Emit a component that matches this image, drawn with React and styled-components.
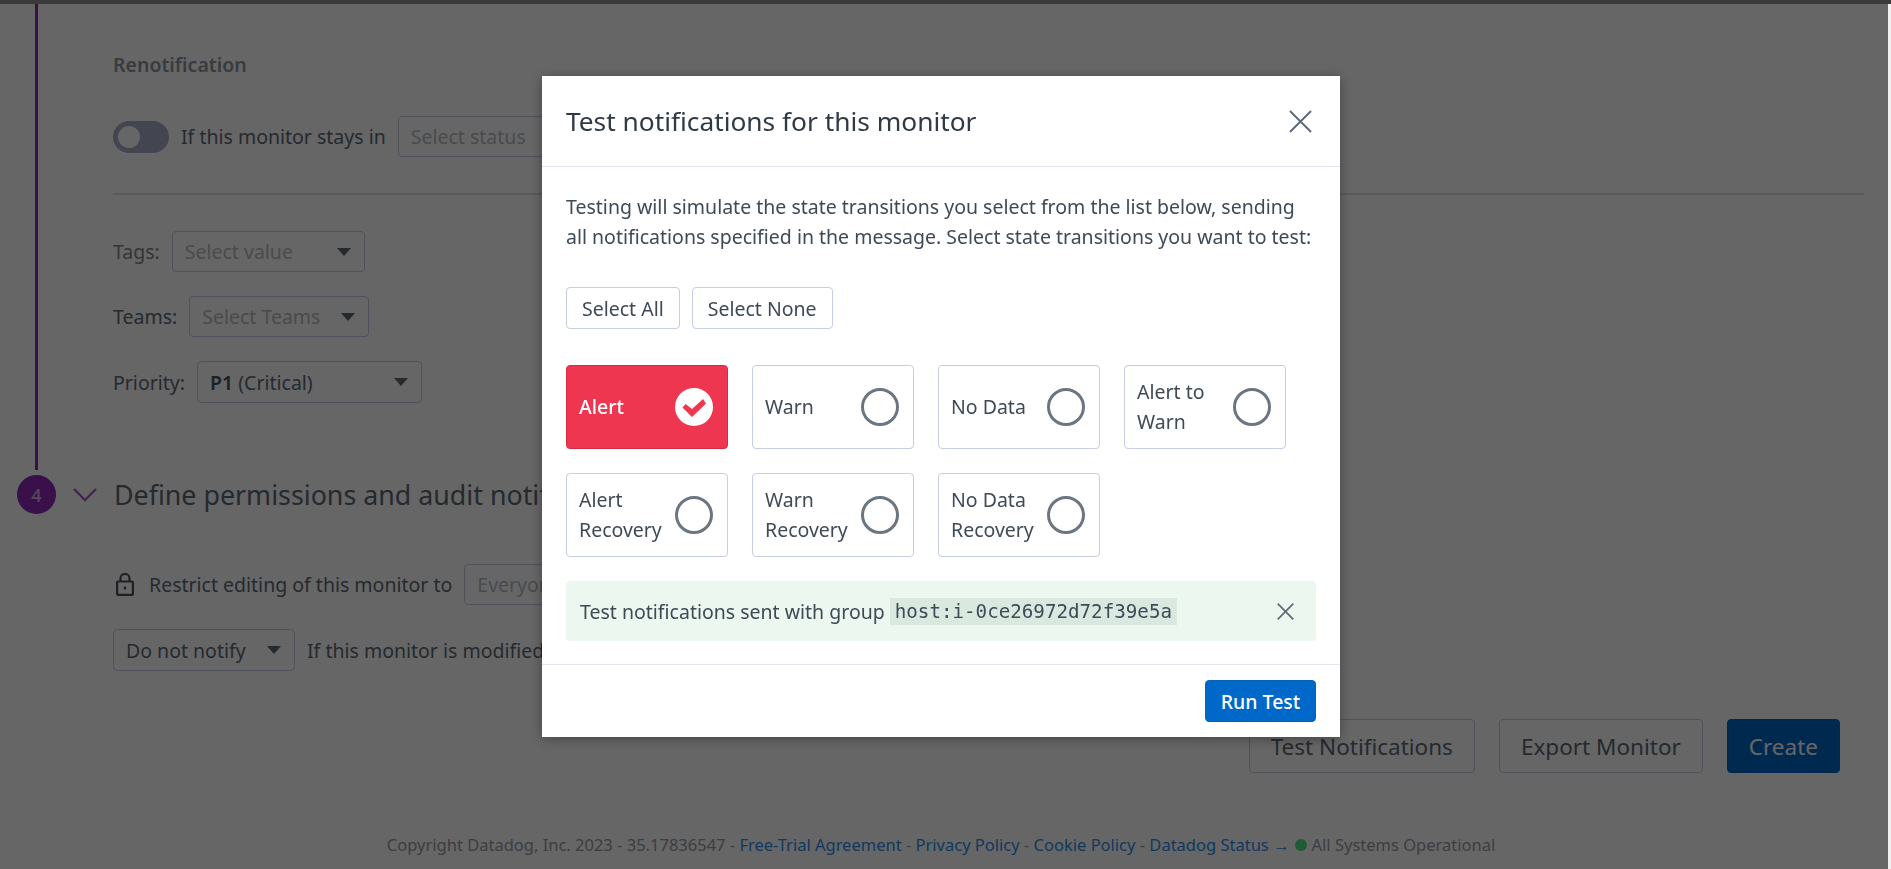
import React from 'react'
import styled, { createGlobalStyle } from 'styled-components'

const GlobalStyle = createGlobalStyle`
  html, body {
    margin: 0;
    height: 100%;
    overflow: hidden;
    background: #f0f0f0;
    font-family: "Noto Sans", "Open Sans", sans-serif;
    font-size: 19.5px;
    color: #5e6a76;
  }
  * { box-sizing: border-box; }
`

const TopBar = styled.div`
  height: 4px;
  background: #3a3a3a;
`
const Page = styled.div`
  width: 1888px;
  height: 865px;
  background: #fff;
  overflow: hidden;
`
const Main = styled.div`
  display: grid;
  grid-template-columns: 39px 1fr;
  column-gap: 57px;
  padding: 0 24px 0 17px;
`
const Rail = styled.div`
  display: flex;
  justify-content: center;
  padding-bottom: 5px;
`
const RailLine = styled.div`
  width: 3px;
  background: #8f2ab8;
`
const Section = styled.div`
  padding: 46px 0 72px;
`
const SubTitle = styled.div`
  font-size: 19.5px;
  font-weight: 600;
  line-height: 30px;
  color: #8c96a2;
`
const Row = styled.div`
  display: flex;
  align-items: center;
  gap: 12px;
  margin-top: ${p => p.$top ?? 24}px;
  white-space: nowrap;
`
const Toggle = styled.div`
  width: 56px;
  height: 32px;
  border-radius: 16px;
  background: #a7aecb;
  padding: 5px;
  flex: none;
`
const ToggleKnob = styled.div`
  width: 22px;
  height: 22px;
  border-radius: 50%;
  background: #fff;
`
const Divider = styled.div`
  height: 2px;
  margin-top: 36px;
  background: #dfe1f0;
`
const Label = styled.span`
  color: ${p => (p.$muted ? '#7d8793' : '#5e6a76')};
`
const Select = styled.div`
  display: flex;
  align-items: center;
  justify-content: space-between;
  width: ${p => p.$w}px;
  height: ${p => p.$h ?? 41}px;
  padding: 0 13px 0 12px;
  border: 1px solid #c7cde3;
  border-radius: 4px;
  color: ${p => (p.$value ? '#5e6a76' : '#b6bbc4')};
  flex: none;
  b { font-weight: 600; color: #4a545e; }
`
const Caret = styled.i`
  width: 0;
  height: 0;
  border-left: 7px solid transparent;
  border-right: 7px solid transparent;
  border-top: 8px solid #5e6a76;
`
const Circle = styled.div`
  width: 39px;
  height: 39px;
  border-radius: 50%;
  background: #8f2ab8;
  color: #ffffffaa;
  display: flex;
  align-items: center;
  justify-content: center;
  font-size: 18px;
  font-weight: 500;
`
const StepHead = styled.div`
  display: flex;
  align-items: center;
  width: 470px;
  height: 39px;
  margin-left: -40px;
  gap: 17px;
  overflow: hidden;
  font-size: 26.8px;
  white-space: nowrap;
  color: #5e6a76;
`
const StepBody = styled.div`
  grid-column: 2;
`
const Actions = styled.div`
  display: flex;
  justify-content: flex-end;
  gap: 24px;
  margin-top: 48px;
  padding-right: 24px;
`
const BigButton = styled.button`
  height: 54px;
  padding: 0 21px;
  font: inherit;
  font-size: 22.5px;
  border-radius: 4px;
  border: 1px solid ${p => (p.$primary ? '#0068c9' : '#c7cde3')};
  background: ${p => (p.$primary ? '#0068c9' : '#fff')};
  color: ${p => (p.$primary ? '#fff' : '#5e6a76')};
`
const Footer = styled.div`
  display: flex;
  justify-content: center;
  align-items: center;
  gap: 5px;
  margin-top: 58px;
  padding-right: 6px;
  font-size: 16.5px;
  line-height: 28px;
  color: #979ba3;
  white-space: pre;
`
const FooterLink = styled.a`
  color: #2e8fe8;
`
const Arrow = styled.span`
  font-family: "Liberation Sans", sans-serif;
`
const StatusDot = styled.span`
  width: 12px;
  height: 12px;
  border-radius: 50%;
  background: #4ce685;
`

const Overlay = styled.div`
  position: fixed;
  top: 4px;
  left: 0;
  right: 3px;
  bottom: 0;
  background: rgba(0, 0, 0, 0.6);
  display: flex;
  justify-content: center;
  align-items: flex-start;
  padding: 72px 6px 0 0;
`
const Modal = styled.div`
  width: 798px;
  height: 661px;
  background: #fff;
  color: #3e4a56;
  box-shadow: 0 2px 12px rgba(0, 0, 0, 0.35);
  display: flex;
  flex-direction: column;
`
const ModalHeader = styled.div`
  display: flex;
  align-items: center;
  justify-content: space-between;
  height: 91px;
  padding: 0 28px 0 24px;
  border-bottom: 1px solid #e2e5f0;
`
const ModalTitle = styled.div`
  font-size: 26.3px;
  color: #2f3a45;
`
const ModalBody = styled.div`
  flex: 1;
  padding: 25px 24px 0;
`
const Intro = styled.p`
  margin: 0;
  line-height: 30px;
  white-space: pre;
`
const SmallButtons = styled.div`
  display: flex;
  gap: 12px;
  margin-top: 35px;
`
const SmallButton = styled.button`
  height: 42px;
  padding: 0 15px;
  font: inherit;
  color: #3e4a56;
  background: #fff;
  border: 1px solid #c7cde3;
  border-radius: 4px;
`
const CardGrid = styled.div`
  display: grid;
  grid-template-columns: repeat(4, 162px);
  grid-auto-rows: 84px;
  gap: 24px;
  margin-top: 36px;
`
const Card = styled.div`
  display: flex;
  align-items: center;
  justify-content: space-between;
  padding: 0 14px 0 12px;
  line-height: 30px;
  border-radius: 4px;
  border: 1px solid ${p => (p.$active ? '#d92a44' : '#c7cde3')};
  background: ${p => (p.$active ? '#ee3650' : '#fff')};
  color: ${p => (p.$active ? '#fff' : '#3e4a56')};
  font-weight: ${p => (p.$active ? 500 : 400)};
`
const CardText = styled.span`
  width: 90px;
`
const Radio = styled.span`
  width: 38px;
  height: 38px;
  border-radius: 50%;
  border: 3.5px solid #6b7680;
  flex: none;
`
const Banner = styled.div`
  display: flex;
  align-items: center;
  justify-content: space-between;
  height: 60px;
  margin-top: 24px;
  padding: 0 22px 0 14px;
  background: #ebf7ef;
  border-radius: 4px;
`
const BannerText = styled.div`
  display: flex;
  align-items: center;
  gap: 5px;
`
const Code = styled.code`
  font-family: "DejaVu Sans Mono", "Liberation Mono", monospace;
  font-size: 19.2px;
  line-height: 27px;
  padding: 0 5px;
  background: #d9e9e0;
`
const ModalFooter = styled.div`
  display: flex;
  justify-content: flex-end;
  align-items: center;
  height: 73px;
  padding: 0 24px;
  border-top: 1px solid #e2e5f0;
`
const RunButton = styled.button`
  width: 111px;
  height: 42px;
  font: inherit;
  font-weight: 500;
  color: #fff;
  background: #0068c9;
  border: 1px solid #0a62b8;
  border-radius: 4px;
`

const CheckMark = () => (
  <svg width="38" height="38" viewBox="0 0 38 38" style={{ flex: 'none' }}>
    <circle cx="19" cy="19" r="19" fill="#fff" />
    <path d="M7.5 19.5L10.5 16L17 21L28 11L31 15.5L17 29z" fill="#ee3650" />
  </svg>
)

const CloseIcon = ({ size, color, width }) => (
  <svg width={size} height={size} viewBox="0 0 24 24" fill="none" stroke={color} strokeWidth={width}>
    <path d="M1 1l22 22M23 1L1 23" />
  </svg>
)

const LockIcon = () => (
  <svg width="18" height="23" viewBox="0 0 18 23" fill="none" stroke="#4a545e" strokeWidth="2.2" style={{ flex: 'none', margin: '0 3px' }}>
    <rect x="1.1" y="8.5" width="15.8" height="13.4" rx="1" />
    <path d="M4.5 8.5V5.5a4.5 4.5 0 0 1 9 0v3" />
    <path d="M9 13.5v3" />
  </svg>
)

const Chevron = () => (
  <svg width="24" height="14" viewBox="0 0 24 14" fill="none" stroke="#a85ad0" strokeWidth="2.4" style={{ flex: 'none' }}>
    <path d="M1 1l11 11L23 1" />
  </svg>
)

const cards = [
  ['Alert', true], ['Warn'], ['No Data'], ['Alert to Warn'],
  ['Alert Recovery'], ['Warn Recovery'], ['No Data Recovery'],
]

const App = () => (
  <>
    <GlobalStyle />
    <TopBar />
    <Page>
      <Main>
        <Rail><RailLine /></Rail>
        <Section>
          <SubTitle>Renotification</SubTitle>
          <Row $top={36}>
            <Toggle><ToggleKnob /></Toggle>
            <Label>If this monitor stays in</Label>
            <Select $w={300}>Select status</Select>
          </Row>
          <Divider />
          <Row $top={36}>
            <Label $muted>Tags:</Label>
            <Select $w={193}>Select value<Caret /></Select>
          </Row>
          <Row>
            <Label>Teams:</Label>
            <Select $w={180}>Select Teams<Caret /></Select>
          </Row>
          <Row>
            <Label>Priority:</Label>
            <Select $w={225} $h={42} $value><span><b>P1</b> (Critical)</span><Caret /></Select>
          </Row>
        </Section>
        <Circle>4</Circle>
        <StepHead><Chevron />Define permissions and audit notifications</StepHead>
        <StepBody>
          <Row $top={50}>
            <LockIcon />
            <Label>Restrict editing of this monitor to</Label>
            <Select $w={300}>Everyone</Select>
          </Row>
          <Row>
            <Select $w={182} $h={42} $value>Do not notify<Caret /></Select>
            <Label>If this monitor is modified</Label>
          </Row>
          <Actions>
            <BigButton>Test Notifications</BigButton>
            <BigButton>Export Monitor</BigButton>
            <BigButton $primary>Create</BigButton>
          </Actions>
        </StepBody>
      </Main>
      <Footer>
        <span>Copyright Datadog, Inc. 2023 - 35.17836547 - <FooterLink>Free-Trial Agreement</FooterLink> - <FooterLink>Privacy Policy</FooterLink> - <FooterLink>Cookie Policy</FooterLink> - <FooterLink>Datadog Status <Arrow>→</Arrow></FooterLink></span>
        <StatusDot />
        <span>All Systems Operational</span>
      </Footer>
    </Page>
    <Overlay>
      <Modal>
        <ModalHeader>
          <ModalTitle>Test notifications for this monitor</ModalTitle>
          <CloseIcon size={23} color="#5e6a76" width={2} />
        </ModalHeader>
        <ModalBody>
          <Intro>{'Testing will simulate the state transitions you select from the list below, sending\nall notifications specified in the message. Select state transitions you want to test:'}</Intro>
          <SmallButtons>
            <SmallButton>Select All</SmallButton>
            <SmallButton>Select None</SmallButton>
          </SmallButtons>
          <CardGrid>
            {cards.map(([name, active]) => (
              <Card key={name} $active={active}>
                <CardText>{name}</CardText>
                {active ? <CheckMark /> : <Radio />}
              </Card>
            ))}
          </CardGrid>
          <Banner>
            <BannerText>Test notifications sent with group <Code>host:i-0ce26972d72f39e5a</Code></BannerText>
            <CloseIcon size={17} color="#5e6a76" width={2.4} />
          </Banner>
        </ModalBody>
        <ModalFooter><RunButton>Run Test</RunButton></ModalFooter>
      </Modal>
    </Overlay>
  </>
)

export default App
